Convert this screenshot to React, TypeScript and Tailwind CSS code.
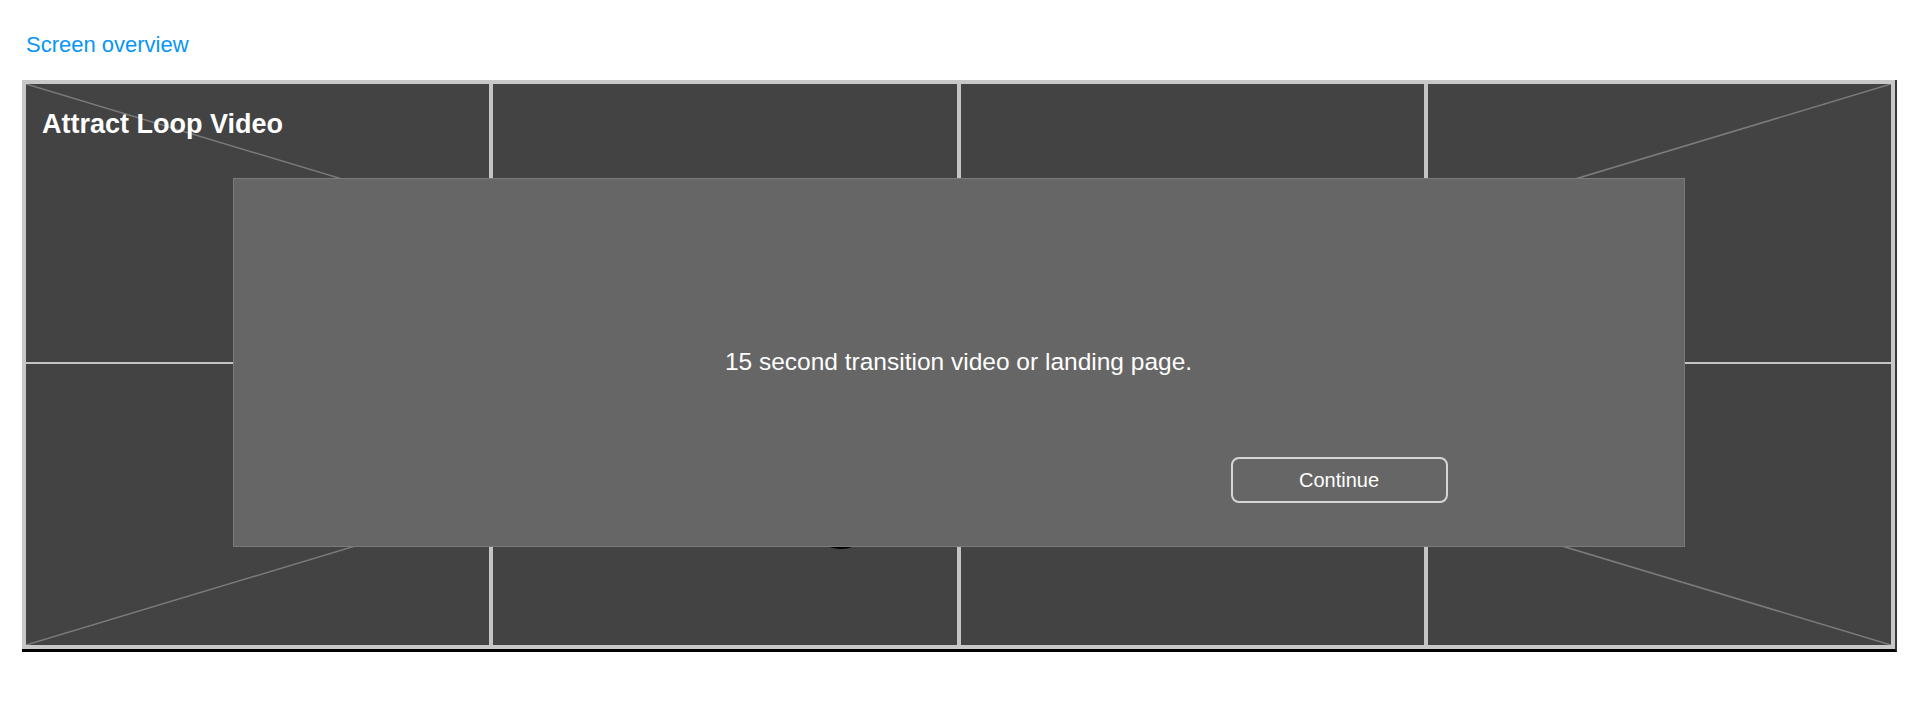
import React from 'react';

// Wireframe overview: a 4x2 video wall with a transition modal on top
const cells = Array.from({ length: 8 }, (_, i) => i);

function PlaceholderMarks() {
  // the big "X" placeholder plus the circle peeking out under the modal
  return (
    <svg
      className="pointer-events-none absolute inset-0"
      width="1865"
      height="561"
      viewBox="0 0 1865 561"
    >
      <line x1="0" y1="0" x2="1865" y2="561" stroke="#7b7b7b" strokeWidth="1.5" />
      <line x1="1865" y1="0" x2="0" y2="561" stroke="#7b7b7b" strokeWidth="1.5" />
      <circle cx="815" cy="435" r="28.5" fill="none" stroke="#000" strokeWidth="3" />
    </svg>
  );
}

export default function App() {
  return (
    <div
      className="min-h-screen bg-white px-[22px] pt-[34px]"
      style={{ fontFamily: '"Liberation Sans", Arial, sans-serif' }}
    >
      <a className="block pl-[4px] text-[22px] leading-[22px] text-[#0895f5]">Screen overview</a>

      <div className="mt-[24px] w-[1875px] border-r-2 border-b-[3px] border-r-[#3a3a3a] border-b-black">
        <div className="relative border-4 border-[#c8c8c8]">
          <div className="grid h-[561px] grid-cols-4 grid-rows-[278px_1fr] gap-x-[4px] gap-y-[2px] bg-[#c4c4c4]">
            {cells.map((c) => (
              <div key={c} className="bg-[#434343]" />
            ))}
          </div>

          <PlaceholderMarks />

          <h1 className="absolute top-[27px] left-[16px] text-[27px] leading-[27px] font-bold text-white">
            Attract Loop Video
          </h1>

          <div className="absolute inset-0 flex justify-center pt-[94px]">
            <div className="flex h-[369px] w-[1452px] flex-col border border-[#7a7a7a] bg-[#666666] pt-[169px]">
              <p className="h-[28px] text-center text-[24.5px] leading-[28px] text-white">
                15 second transition video or landing page.
              </p>
              <button
                type="button"
                className="mt-[81px] mr-[236px] h-[46px] w-[217px] self-end rounded-lg border-2 border-[#d6d6d6] bg-[#666666] text-[20px] text-white"
              >
                Continue
              </button>
            </div>
          </div>
        </div>
      </div>
    </div>
  );
}
